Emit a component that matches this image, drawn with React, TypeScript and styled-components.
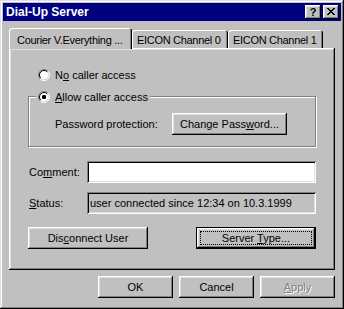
import React from 'react';
import styled, { createGlobalStyle } from 'styled-components';

const GlobalStyle = createGlobalStyle`
    html, body {
        margin: 0;
        padding: 0;
        background: #c0c0c0;
    }
    body {
        font-family: "Liberation Sans", Arial, sans-serif;
        font-size: 11px;
        color: #000;
    }
`;

const bevelOut = `
    box-shadow: inset -1px -1px 0 #000, inset 1px 1px 0 #fff,
        inset -2px -2px 0 #808080, inset 2px 2px 0 #dfdfdf;
`;

const bevelIn = `
    box-shadow: inset 1px 1px 0 #808080, inset -1px -1px 0 #fff,
        inset 2px 2px 0 #000, inset -2px -2px 0 #dfdfdf;
`;

const Window = styled.div`
    width: 344px;
    height: 309px;
    box-sizing: border-box;
    padding: 3px;
    background: #c0c0c0;
    display: flex;
    flex-direction: column;
    box-shadow: inset -1px -1px 0 #000, inset 1px 1px 0 #dfdfdf,
        inset -2px -2px 0 #808080, inset 2px 2px 0 #fff;
`;

const TitleBar = styled.div`
    height: 18px;
    background: #000080;
    color: #fff;
    display: flex;
    align-items: center;
    padding: 0 2px 0 3px;
    gap: 2px;
`;

const TitleText = styled.span`
    flex: 1;
    font-weight: bold;
    font-size: 12px;
`;

const TitleButton = styled.div`
    width: 16px;
    height: 14px;
    box-sizing: border-box;
    background: #c0c0c0;
    color: #000;
    display: flex;
    align-items: center;
    justify-content: center;
    font-weight: bold;
    font-size: 11px;
    padding-bottom: 1px;
    ${bevelOut}
`;

const Body = styled.div`
    flex: 1;
    display: flex;
    flex-direction: column;
    padding: 7px 6px 8px 6px;
`;

const TabRow = styled.div`
    height: 20px;
    display: flex;
    align-items: flex-end;
`;

const Tab = styled.div<{ $active?: boolean; $width: number }>`
    position: relative;
    z-index: ${p => (p.$active ? 2 : 1)};
    width: ${p => p.$width}px;
    height: ${p => (p.$active ? 21 : 18)}px;
    margin-bottom: ${p => (p.$active ? -1 : 0)}px;
    box-sizing: border-box;
    background: #c0c0c0;
    border-radius: 3px 3px 0 0;
    padding: ${p => (p.$active ? '3px 0 0 8px' : '1px 0 0 5px')};
    display: flex;
    align-items: center;
    white-space: nowrap;
    overflow: hidden;
    letter-spacing: -0.3px;
    box-shadow: inset 1px 1px 0 #fff, inset -1px 0 0 #000, inset -2px 0 0 #808080;
`;

const Panel = styled.div`
    height: 222px;
    box-sizing: border-box;
    padding: 20px 19px 0 19px;
    display: flex;
    flex-direction: column;
    box-shadow: inset -1px -1px 0 #000, inset 1px 1px 0 #fff,
        inset -2px -2px 0 #808080, inset 2px 2px 0 #dfdfdf;
`;

const RadioRow = styled.label`
    display: flex;
    align-items: center;
    gap: 5px;
    height: 13px;
    margin-left: 10px;
`;

const GroupBox = styled.div`
    margin-top: 15px;
    border: 1px solid #808080;
    box-shadow: 1px 1px 0 #fff, inset 1px 1px 0 #fff;
    display: flex;
    flex-direction: column;
    padding: 0 0 11px 26px;
`;

const Legend = styled.label`
    align-self: flex-start;
    display: flex;
    align-items: center;
    gap: 5px;
    height: 13px;
    margin: -7px 0 0 -19px;
    padding: 0 2px;
    background: #c0c0c0;
`;

const FieldRow = styled.div<{ $top: number }>`
    display: flex;
    align-items: center;
    margin-top: ${p => p.$top}px;
`;

const Label = styled.span<{ $width: number; $indent?: number }>`
    width: ${p => p.$width}px;
    padding-left: ${p => p.$indent ?? 0}px;
    box-sizing: border-box;
    flex-shrink: 0;
`;

const Button = styled.button<{ $width: number; $default?: boolean }>`
    width: ${p => p.$width}px;
    height: 22px;
    box-sizing: border-box;
    margin: 0;
    padding: 0;
    border: ${p => (p.$default ? '1px solid #000' : 'none')};
    background: #c0c0c0;
    font: inherit;
    color: #000;
    display: flex;
    align-items: center;
    justify-content: center;
    white-space: pre;
    ${bevelOut}
    &:disabled {
        color: #808080;
        text-shadow: 1px 1px 0 #fff;
    }
`;

const Focus = styled.span`
    display: flex;
    align-items: center;
    justify-content: center;
    align-self: stretch;
    flex: 1;
    margin: 3px;
    border: 1px dotted #000;
`;

const TextBox = styled.div<{ $sunkenGray?: boolean }>`
    flex: 1;
    height: 22px;
    box-sizing: border-box;
    background: ${p => (p.$sunkenGray ? '#c0c0c0' : '#fff')};
    padding: 0 3px;
    display: flex;
    align-items: center;
    white-space: nowrap;
    ${bevelIn}
`;

const ButtonRow = styled.div<{ $top: number; $align: string }>`
    display: flex;
    justify-content: ${p => p.$align};
    gap: 6px;
    margin-top: ${p => p.$top}px;
`;

const Radio = ({ checked }: { checked?: boolean }) => (
    <svg width="12" height="12" viewBox="0 0 12 12">
        <circle cx="6" cy="6" r="4.5" fill="#fff" />
        <path d="M2.1 9.9 A5.5 5.5 0 0 1 9.9 2.1" fill="none" stroke="#808080" />
        <path d="M9.9 2.1 A5.5 5.5 0 0 1 2.1 9.9" fill="none" stroke="#fff" />
        <path d="M2.8 9.2 A4.5 4.5 0 0 1 9.2 2.8" fill="none" stroke="#000" />
        <path d="M9.2 2.8 A4.5 4.5 0 0 1 2.8 9.2" fill="none" stroke="#dfdfdf" />
        {checked && <rect x="4" y="4" width="4" height="4" rx="1.2" fill="#000" />}
    </svg>
);

const closeCells = [
    [0, 0], [1, 0], [6, 0], [7, 0],
    [1, 1], [2, 1], [5, 1], [6, 1],
    [2, 2], [3, 2], [4, 2], [5, 2],
    [3, 3], [4, 3],
    [2, 4], [3, 4], [4, 4], [5, 4],
    [1, 5], [2, 5], [5, 5], [6, 5],
    [0, 6], [1, 6], [6, 6], [7, 6],
];

const CloseGlyph = () => (
    <svg width="8" height="7" viewBox="0 0 8 7" shapeRendering="crispEdges">
        {closeCells.map(([x, y]) => (
            <rect key={`${x}_${y}`} x={x} y={y} width="1" height="1" fill="#000" />
        ))}
    </svg>
);

export default function App() {
    return (
        <>
            <GlobalStyle />
            <Window>
                <TitleBar>
                    <TitleText>Dial-Up Server</TitleText>
                    <TitleButton>?</TitleButton>
                    <TitleButton>
                        <CloseGlyph />
                    </TitleButton>
                </TitleBar>
                <Body>
                    <TabRow>
                        <Tab $active $width={123}>Courier V.Everything ...</Tab>
                        <Tab $width={96}>EICON Channel 0</Tab>
                        <Tab $width={95}>EICON Channel 1</Tab>
                    </TabRow>
                    <Panel>
                        <RadioRow>
                            <Radio />
                            <span>
                                N<u>o</u> caller access
                            </span>
                        </RadioRow>
                        <GroupBox>
                            <Legend>
                                <Radio checked />
                                <span>
                                    <u>A</u>llow caller access
                                </span>
                            </Legend>
                            <FieldRow $top={10}>
                                <Label $width={117}>Password protection:</Label>
                                <Button $width={115}>
                                    <span>
                                        Change Pass<u>w</u>ord...
                                    </span>
                                </Button>
                            </FieldRow>
                        </GroupBox>
                        <FieldRow $top={14}>
                            <Label $width={59} $indent={1}>
                                Co<u>m</u>ment:
                            </Label>
                            <TextBox />
                        </FieldRow>
                        <FieldRow $top={9}>
                            <Label $width={59} $indent={1}>
                                <u>S</u>tatus:
                            </Label>
                            <TextBox $sunkenGray>user connected since 12:34 on 10.3.1999</TextBox>
                        </FieldRow>
                        <ButtonRow $top={13} $align="space-between">
                            <Button $width={120}>
                                <span>
                                    Dis<u>c</u>onnect User
                                </span>
                            </Button>
                            <Button $width={120} $default>
                                <Focus>
                                    <span>
                                        Server <u>T</u>ype...
                                    </span>
                                </Focus>
                            </Button>
                        </ButtonRow>
                    </Panel>
                    <ButtonRow $top={6} $align="flex-end">
                        <Button $width={75}>OK</Button>
                        <Button $width={75}>Cancel</Button>
                        <Button $width={75} disabled>
                            <span>
                                <u>A</u>pply
                            </span>
                        </Button>
                    </ButtonRow>
                </Body>
            </Window>
        </>
    );
}
